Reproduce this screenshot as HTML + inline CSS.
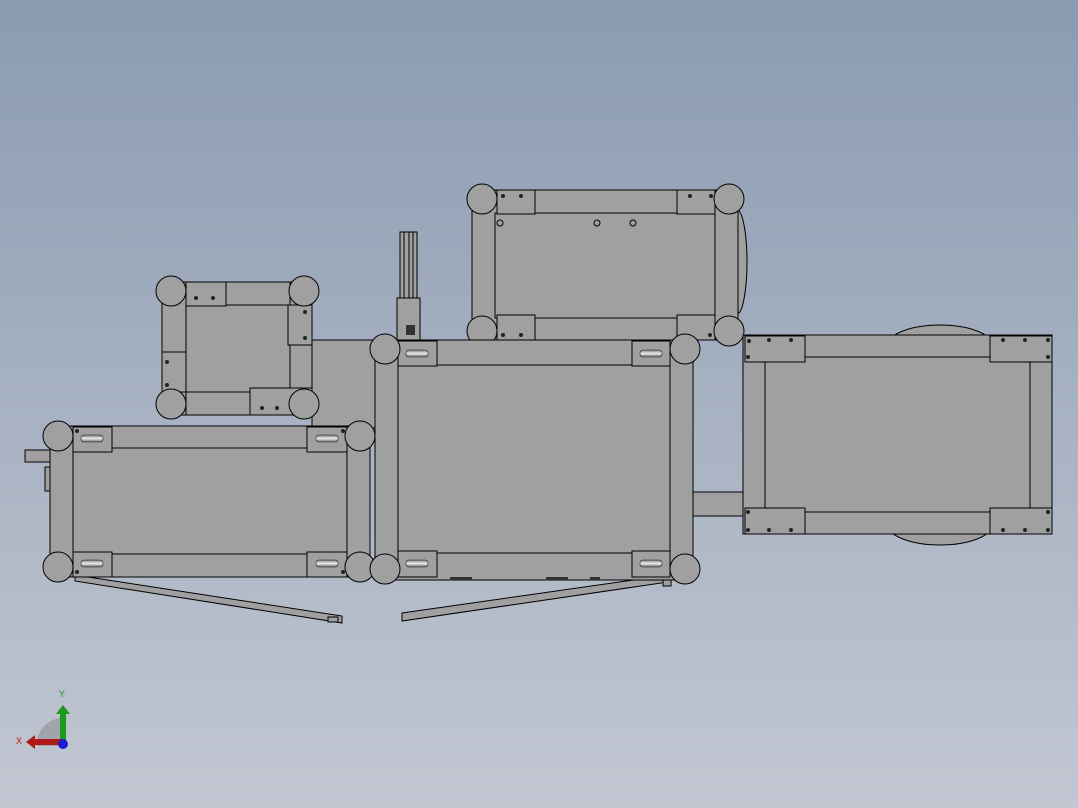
<!DOCTYPE html>
<html><head><meta charset="utf-8"><style>
html,body{margin:0;padding:0;width:1078px;height:808px;overflow:hidden}
body{background:linear-gradient(#8a9bb1 0%,#a4afc0 45%,#c2c7d2 100%)}
svg{position:absolute;left:0;top:0}
</style></head><body>
<svg width="1078" height="808" viewBox="0 0 1078 808" xmlns="http://www.w3.org/2000/svg">
<defs>
<linearGradient id="whl" x1="0" y1="0" x2="0" y2="1">
<stop offset="0" stop-color="#777"/><stop offset="0.5" stop-color="#eee"/><stop offset="1" stop-color="#666"/></linearGradient>
</defs>
<g fill="#a0a0a0" stroke="#000" stroke-width="1">
<!-- wheels behind cart 4 -->
<ellipse cx="940" cy="345" rx="52" ry="20"/>
<ellipse cx="940" cy="525" rx="52" ry="20"/>
<ellipse cx="737" cy="262" rx="10" ry="52"/>
<!-- connector -->
<rect x="693" y="492" width="52" height="24"/>
<!-- left bars -->
<polygon points="75,575 342,616 342,623 75,581"/>
<polygon points="402,613 668,575 668,582 402,621"/>
<rect x="663" y="576" width="8" height="10"/>
<rect x="328" y="617" width="10" height="5"/>
<!-- post -->
<rect x="400" y="232" width="17" height="68"/>
<line x1="404" y1="232" x2="404" y2="300"/><line x1="409" y1="232" x2="409" y2="300"/><line x1="413" y1="232" x2="413" y2="300"/>
<rect x="397" y="298" width="23" height="44"/>
<!-- box behind small cart -->
<rect x="312" y="340" width="64" height="88"/>
<!-- small left extras -->
<rect x="25" y="450" width="26" height="12"/>
<rect x="45" y="467" width="6" height="24"/>

<!-- cart 5 small -->
<rect x="162" y="282" width="150" height="133"/>
<rect x="186" y="305" width="104" height="87" fill="#a0a0a0"/>
<line x1="186" y1="282" x2="186" y2="415"/><line x1="290" y1="282" x2="290" y2="415"/>
<rect x="186" y="282" width="40" height="24"/>
<rect x="288" y="305" width="24" height="40"/>
<rect x="162" y="352" width="24" height="40"/>
<rect x="250" y="388" width="62" height="27"/>
<circle cx="171" cy="291" r="15"/><circle cx="304" cy="291" r="15"/>
<circle cx="171" cy="404" r="15"/><circle cx="304" cy="404" r="15"/>

<!-- cart 3 top -->
<rect x="472" y="190" width="266" height="150"/>
<rect x="495" y="213" width="220" height="105"/>
<line x1="472" y1="213" x2="472" y2="318"/>
<rect x="497" y="190" width="38" height="24"/><rect x="677" y="190" width="38" height="24"/>
<rect x="497" y="315" width="38" height="25"/><rect x="677" y="315" width="38" height="25"/>
<circle cx="482" cy="199" r="15"/><circle cx="729" cy="199" r="15"/>
<circle cx="482" cy="331" r="15"/><circle cx="729" cy="331" r="15"/>
<circle cx="500" cy="223" r="3"/><circle cx="597" cy="223" r="3"/><circle cx="633" cy="223" r="3"/>

<!-- cart 4 right -->
<rect x="743" y="335" width="309" height="199"/>
<rect x="765" y="357" width="265" height="155"/>
<rect x="745" y="336" width="60" height="26"/><rect x="990" y="336" width="62" height="26"/>
<rect x="745" y="508" width="60" height="26"/><rect x="990" y="508" width="62" height="26"/>

<!-- cart 1 bottom left -->
<rect x="50" y="426" width="320" height="151"/>
<rect x="73" y="448" width="274" height="106"/>
<rect x="73" y="427" width="39" height="25"/><rect x="307" y="427" width="40" height="25"/>
<rect x="73" y="552" width="39" height="25"/><rect x="307" y="552" width="40" height="25"/>
<circle cx="58" cy="436" r="15"/><circle cx="360" cy="436" r="15"/>
<circle cx="58" cy="567" r="15"/><circle cx="360" cy="567" r="15"/>

<!-- cart 2 middle -->
<rect x="375" y="340" width="318" height="240"/>
<rect x="398" y="365" width="272" height="188"/>
<rect x="398" y="341" width="39" height="25"/><rect x="632" y="341" width="38" height="25"/>
<rect x="398" y="551" width="39" height="26"/><rect x="632" y="551" width="38" height="26"/>
<circle cx="385" cy="349" r="15"/><circle cx="685" cy="349" r="15"/>
<circle cx="385" cy="569" r="15"/><circle cx="685" cy="569" r="15"/>
</g>
<!-- caster wheels -->
<g fill="url(#whl)" stroke="#222" stroke-width="0.6">
<rect x="81" y="435" width="22" height="7" rx="3"/><rect x="316" y="435" width="22" height="7" rx="3"/>
<rect x="81" y="560" width="22" height="7" rx="3"/><rect x="316" y="560" width="22" height="7" rx="3"/>
<rect x="406" y="350" width="22" height="7" rx="3"/><rect x="640" y="350" width="22" height="7" rx="3"/>
<rect x="406" y="560" width="22" height="7" rx="3"/><rect x="640" y="560" width="22" height="7" rx="3"/>
</g>
<!-- holes -->
<g fill="#222">
<circle cx="503" cy="196" r="2"/><circle cx="521" cy="196" r="2"/><circle cx="690" cy="196" r="2"/><circle cx="711" cy="196" r="2"/>
<circle cx="503" cy="335" r="2"/><circle cx="521" cy="335" r="2"/><circle cx="710" cy="335" r="2"/>
<circle cx="749" cy="341" r="2"/><circle cx="769" cy="340" r="2"/><circle cx="791" cy="340" r="2"/><circle cx="1003" cy="340" r="2"/><circle cx="1025" cy="340" r="2"/><circle cx="1048" cy="340" r="2"/>
<circle cx="1048" cy="357" r="2"/><circle cx="748" cy="357" r="2"/>
<circle cx="748" cy="512" r="2"/><circle cx="748" cy="530" r="2"/><circle cx="769" cy="530" r="2"/><circle cx="791" cy="530" r="2"/><circle cx="1003" cy="530" r="2"/><circle cx="1025" cy="530" r="2"/><circle cx="1048" cy="530" r="2"/><circle cx="1048" cy="512" r="2"/>
<circle cx="167" cy="362" r="2"/><circle cx="167" cy="385" r="2"/><circle cx="305" cy="312" r="2"/><circle cx="305" cy="338" r="2"/>
<circle cx="262" cy="408" r="2"/><circle cx="277" cy="408" r="2"/><circle cx="196" cy="298" r="2"/><circle cx="213" cy="298" r="2"/>
<circle cx="77" cy="431" r="2"/><circle cx="343" cy="431" r="2"/><circle cx="77" cy="572" r="2"/><circle cx="343" cy="572" r="2"/>
</g>
<g fill="#333">
<rect x="450" y="577" width="22" height="3"/><rect x="546" y="577" width="22" height="3"/><rect x="590" y="577" width="10" height="3"/>
<rect x="406" y="325" width="9" height="10"/>
</g>
<!-- triad -->
<path d="M37,746 A26,26 0 0 1 63,718 L63,746 Z" fill="#9a9ca2" opacity="0.8"/>
<rect x="60" y="712" width="6" height="34" fill="#1a9a1a"/>
<polygon points="56,714 63,705 70,714" fill="#1a9a1a"/>
<rect x="34" y="739" width="28" height="6" fill="#b01818"/>
<polygon points="35,735 26,742 35,749" fill="#b01818"/>
<circle cx="63" cy="744" r="5" fill="#1a1ad0"/>
<text x="59" y="697" font-family="Liberation Sans, sans-serif" font-size="9" fill="#1a9a1a">Y</text>
<text x="16" y="744" font-family="Liberation Sans, sans-serif" font-size="9" fill="#c01818">X</text>
</svg>
</body></html>
